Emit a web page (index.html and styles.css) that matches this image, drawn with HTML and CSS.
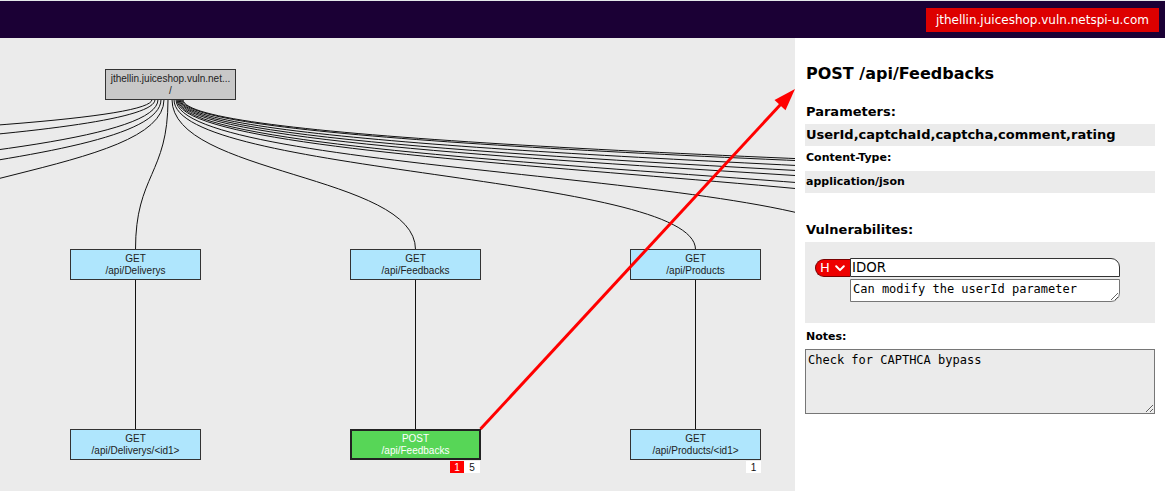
FILE: index.html
```html
<!DOCTYPE html>
<html lang="en">
<head>
<meta charset="utf-8">
<title>Juice Shop map</title>
<link rel="stylesheet" href="styles.css">
</head>
<body>
<header class="topbar">
  <div class="host">jthellin.juiceshop.vuln.netspi-u.com</div>
</header>
<main class="workspace">
  <section class="canvas">
    <svg class="graph" width="795" height="453" viewBox="0 38 795 453" xmlns="http://www.w3.org/2000/svg">
      <g class="edges">
        <path d="M152,99.5 C152,174.5 -3244,174.5 -3244,249.5"/>
        <path d="M155,99.5 C155,174.5 -1627,174.5 -1627,249.5"/>
        <path d="M158,99.5 C158,174.5 -617,174.5 -617,249.5"/>
        <path d="M161,99.5 C161,174.5 -356,174.5 -356,249.5"/>
        <path d="M164,99.5 C164,174.5 -134,174.5 -134,249.5"/>
        <path d="M168,99.5 C168,174.5 135.5,174.5 135.5,249.5"/>
        <path d="M172,99.5 C172,174.5 415.5,174.5 415.5,249.5"/>
        <path d="M174,99.5 C174,174.5 695.5,174.5 695.5,249.5"/>
        <path d="M176,99.5 C176,174.5 867,174.5 867,249.5"/>
        <path d="M177,99.5 C177,174.5 1087,174.5 1087,249.5"/>
        <path d="M178,99.5 C178,174.5 1199,174.5 1199,249.5"/>
        <path d="M179,99.5 C179,174.5 1379,174.5 1379,249.5"/>
        <path d="M180,99.5 C180,174.5 1559,174.5 1559,249.5"/>
        <path d="M181,99.5 C181,174.5 1793,174.5 1793,249.5"/>
        <path d="M182,99.5 C182,174.5 2093,174.5 2093,249.5"/>
        <path d="M183,99.5 C183,174.5 2237,174.5 2237,249.5"/>
        <path d="M135.5,279.5 V429.5"/>
        <path d="M415.5,279.5 V429.5"/>
        <path d="M695.5,279.5 V429.5"/>
      </g>

      <g class="node node-root">
        <rect x="105.5" y="69.5" width="130" height="30"/>
        <text x="170.5" y="81.9">jthellin.juiceshop.vuln.net...</text>
        <text x="170.5" y="94.4">/</text>
      </g>

      <g class="node node-get">
        <rect x="70.5" y="249.5" width="130" height="30"/>
        <text x="135.5" y="261.9">GET</text>
        <text x="135.5" y="274.4">/api/Deliverys</text>
      </g>
      <g class="node node-get">
        <rect x="350.5" y="249.5" width="130" height="30"/>
        <text x="415.5" y="261.9">GET</text>
        <text x="415.5" y="274.4">/api/Feedbacks</text>
      </g>
      <g class="node node-get">
        <rect x="630.5" y="249.5" width="130" height="30"/>
        <text x="695.5" y="261.9">GET</text>
        <text x="695.5" y="274.4">/api/Products</text>
      </g>

      <g class="node node-get">
        <rect x="70.5" y="429.5" width="130" height="30"/>
        <text x="135.5" y="441.9">GET</text>
        <text x="135.5" y="454.4">/api/Deliverys/&lt;id1&gt;</text>
      </g>
      <g class="node node-post">
        <rect x="351" y="430" width="129" height="29"/>
        <text x="415.5" y="441.9">POST</text>
        <text x="415.5" y="454.4">/api/Feedbacks</text>
      </g>
      <g class="node node-get">
        <rect x="630.5" y="429.5" width="130" height="30"/>
        <text x="695.5" y="441.9">GET</text>
        <text x="695.5" y="454.4">/api/Products/&lt;id1&gt;</text>
      </g>

      <g class="badges">
        <rect class="badge-red" x="450" y="461" width="14" height="12"/>
        <text class="badge-text badge-text-light" x="457" y="470.5">1</text>
        <rect class="badge-white" x="464" y="461" width="16" height="12"/>
        <text class="badge-text" x="472" y="470.5">5</text>
        <rect class="badge-white" x="746" y="461" width="15" height="12"/>
        <text class="badge-text" x="753.5" y="470.5">1</text>
      </g>

      <g class="arrow">
        <line class="arrow-line" x1="480.5" y1="429" x2="781" y2="104"/>
        <polygon class="arrow-head" points="795,89 785.5,110.2 774.5,100"/>
      </g>
    </svg>
  </section>

  <aside class="panel">
    <h1 class="endpoint">POST /api/Feedbacks</h1>
    <h2 class="label-lg">Parameters:</h2>
    <div class="value-bar value-lg">UserId,captchaId,captcha,comment,rating</div>
    <h3 class="label-sm">Content-Type:</h3>
    <div class="value-bar value-sm">application/json</div>
    <h2 class="label-lg vuln-label">Vulnerabilites:</h2>
    <div class="vuln-box">
      <div class="vuln">
        <div class="vuln-head">
          <div class="sev">
            <span class="sev-letter">H</span>
            <svg class="chev" width="10" height="7" viewBox="0 0 10 7" xmlns="http://www.w3.org/2000/svg"><path d="M1.2 1.3 L5 5.1 L8.8 1.3"/></svg>
          </div>
          <input class="vuln-title" type="text" value="IDOR">
        </div>
        <textarea class="vuln-desc">Can modify the userId parameter</textarea>
      </div>
    </div>
    <h3 class="label-sm notes-label">Notes:</h3>
    <textarea class="notes">Check for CAPTHCA bypass</textarea>
  </aside>
</main>
</body>
</html>
```

FILE: styles.css
```css
* {
  box-sizing: border-box;
}

html,
body {
  margin: 0;
  padding: 0;
}

body {
  width: 1165px;
  height: 491px;
  overflow: hidden;
  background: #ffffff;
  font-family: "DejaVu Sans", Verdana, sans-serif;
  color: #000;
}

/* top bar */
.topbar {
  height: 38px;
  border-top: 1px solid #e4e8ea;
  background: #1b0035;
  display: flex;
  align-items: center;
  justify-content: flex-end;
  padding-right: 6px;
}

.host {
  height: 24px;
  line-height: 24px;
  padding: 0 10px;
  background: #dd0000;
  color: #ffffff;
  font-size: 12px;
  white-space: nowrap;
}

/* main area */
.workspace {
  display: flex;
  height: 453px;
}

.canvas {
  flex: 0 0 795px;
  height: 453px;
  background: #ebebeb;
  overflow: hidden;
}

.graph {
  display: block;
}

.edges path {
  fill: none;
  stroke: #111111;
  stroke-width: 1;
}

.node rect {
  stroke: #333333;
  stroke-width: 1;
}

.node text {
  font-family: "Liberation Sans", Arial, sans-serif;
  font-size: 10px;
  text-anchor: middle;
  fill: #222222;
}

.node-root rect {
  fill: #c8c8c8;
}

.node-get rect {
  fill: #afe6fd;
}

.node-post rect {
  fill: #57d657;
  stroke: #222222;
  stroke-width: 2;
}

.node-post text {
  fill: #ffffff;
}

.badge-red {
  fill: #ff0000;
}

.badge-white {
  fill: #ffffff;
}

.badge-text {
  font-family: "Liberation Sans", Arial, sans-serif;
  font-size: 10px;
  text-anchor: middle;
  fill: #111111;
}

.badge-text-light {
  fill: #ffffff;
}

.arrow-line {
  stroke: #ff0000;
  stroke-width: 3;
}

.arrow-head {
  fill: #ff0000;
}

/* side panel */
.panel {
  flex: 1 1 auto;
  padding: 0 10px;
  background: #ffffff;
}

.endpoint {
  margin: 26px 0 0;
  font-size: 16px;
  line-height: 20px;
  font-weight: bold;
  padding-left: 1px;
}

.label-lg {
  margin: 20px 0 0;
  font-size: 13px;
  line-height: 16px;
  font-weight: bold;
  padding-left: 1px;
}

.label-sm {
  margin: 5px 0 0;
  font-size: 11px;
  line-height: 14px;
  font-weight: bold;
  padding-left: 1px;
}

.value-bar {
  height: 22px;
  background: #ebebeb;
  font-weight: bold;
  white-space: nowrap;
  padding-left: 1px;
}

.value-lg {
  margin-top: 4px;
  font-size: 13px;
  line-height: 22px;
}

.value-sm {
  margin-top: 6px;
  font-size: 11px;
  line-height: 22px;
}

.vuln-label {
  margin-top: 29px;
}

.vuln-box {
  margin-top: 4px;
  height: 81px;
  padding: 16px 0 0 10px;
  background: #ebebeb;
}

.vuln-head {
  display: flex;
  align-items: flex-end;
  height: 19px;
}

.sev {
  width: 35px;
  height: 18px;
  display: flex;
  align-items: center;
  gap: 5px;
  padding-left: 4px;
  background: #ee0000;
  border: 1px solid #7a0000;
  border-right: none;
  border-radius: 9px 0 0 9px;
  color: #ffffff;
}

.sev-letter {
  font-size: 13px;
  line-height: 16px;
}

.chev {
  display: block;
}

.chev path {
  fill: none;
  stroke: #ffffff;
  stroke-width: 2;
  stroke-linecap: round;
  stroke-linejoin: round;
}

.vuln-title {
  width: 270px;
  height: 19px;
  margin: 0;
  padding: 0 1px;
  border: 1px solid #333333;
  border-radius: 0 9px 0 0;
  background: #ffffff;
  font-family: "DejaVu Sans", Verdana, sans-serif;
  font-size: 13.33px;
  color: #000;
  outline: none;
}

.vuln-desc {
  display: block;
  width: 270px;
  height: 23px;
  margin: 2px 0 0 35px;
  padding: 2px;
  border: 1px solid #767676;
  border-radius: 0 0 9px 0;
  background: #ffffff;
  font-family: "DejaVu Sans Mono", "Liberation Mono", monospace;
  font-size: 12px;
  line-height: 14px;
  color: #000;
  overflow: hidden;
}

.notes-label {
  margin-top: 7px;
}

.notes {
  display: block;
  width: 350px;
  height: 65px;
  margin: 5px 0 0;
  padding: 3px 2px;
  border: 1px solid #767676;
  background: #ebebeb;
  font-family: "DejaVu Sans Mono", "Liberation Mono", monospace;
  font-size: 12px;
  line-height: 14px;
  color: #000;
  overflow: hidden;
}
```
